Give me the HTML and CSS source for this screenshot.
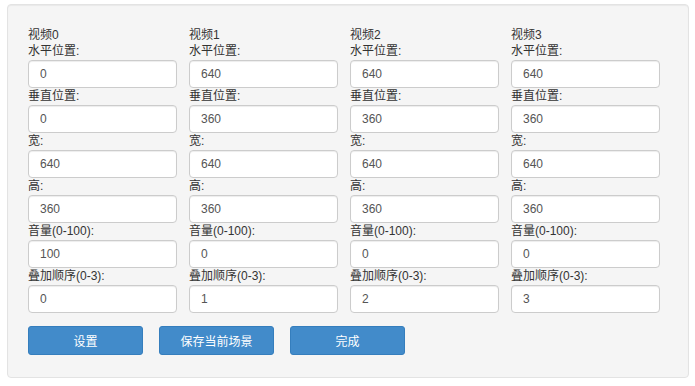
FILE: index.html
```html
<!DOCTYPE html>
<html lang="zh-CN">
<head>
  <meta charset="UTF-8" />
  <title>视频布局设置</title>
  <link rel="stylesheet" href="styles.css">
</head>
<body>
  <div class="well">
    <div class="video-grid">
      <!-- 视频0 -->
      <div class="video-col">
        <div class="video-title">视频0</div>
        <label>水平位置:</label>
        <input type="text" value="0">
        <label>垂直位置:</label>
        <input type="text" value="0">
        <label>宽:</label>
        <input type="text" value="640">
        <label>高:</label>
        <input type="text" value="360">
        <label>音量(0-100):</label>
        <input type="text" value="100">
        <label>叠加顺序(0-3):</label>
        <input type="text" value="0">
      </div>
      <!-- 视频1 -->
      <div class="video-col">
        <div class="video-title">视频1</div>
        <label>水平位置:</label>
        <input type="text" value="640">
        <label>垂直位置:</label>
        <input type="text" value="360">
        <label>宽:</label>
        <input type="text" value="640">
        <label>高:</label>
        <input type="text" value="360">
        <label>音量(0-100):</label>
        <input type="text" value="0">
        <label>叠加顺序(0-3):</label>
        <input type="text" value="1">
      </div>
      <!-- 视频2 -->
      <div class="video-col">
        <div class="video-title">视频2</div>
        <label>水平位置:</label>
        <input type="text" value="640">
        <label>垂直位置:</label>
        <input type="text" value="360">
        <label>宽:</label>
        <input type="text" value="640">
        <label>高:</label>
        <input type="text" value="360">
        <label>音量(0-100):</label>
        <input type="text" value="0">
        <label>叠加顺序(0-3):</label>
        <input type="text" value="2">
      </div>
      <!-- 视频3 -->
      <div class="video-col">
        <div class="video-title">视频3</div>
        <label>水平位置:</label>
        <input type="text" value="640">
        <label>垂直位置:</label>
        <input type="text" value="360">
        <label>宽:</label>
        <input type="text" value="640">
        <label>高:</label>
        <input type="text" value="360">
        <label>音量(0-100):</label>
        <input type="text" value="0">
        <label>叠加顺序(0-3):</label>
        <input type="text" value="3">
      </div>
    </div>

    <div class="actions">
      <button class="btn">设置</button>
      <button class="btn">保存当前场景</button>
      <button class="btn">完成</button>
    </div>
  </div>
</body>
</html>
```

FILE: styles.css
```css
/* Reset & Base */
*, *::before, *::after { box-sizing: border-box; margin: 0; padding: 0; }
html, body { font-family: 'Liberation Sans', Arial, 'Noto Sans CJK SC', sans-serif; font-size: 12px; color: #333; background: #fff; }
button { cursor: pointer; font-family: inherit; }

/* Well */
.well { margin: 4px 6px 0 7px; height: 374px; padding: 22px 20px 0 20px; background: #f5f5f5; border: 1px solid #e3e3e3; border-radius: 4px; box-shadow: inset 0 1px 1px rgba(0,0,0,0.05); }

/* Video columns */
.video-grid { display: grid; grid-template-columns: repeat(4, 149px); column-gap: 12px; }
.video-col { display: flex; flex-direction: column; }
.video-title { height: 16px; line-height: 16px; }
.video-col label { display: block; height: 17px; line-height: 16px; }
.video-col input {
  width: 149px;
  height: 28px;
  padding: 0 11px;
  font-family: inherit;
  font-size: 12px;
  color: #555;
  background: #fff;
  border: 1px solid #ccc;
  border-radius: 4px;
  box-shadow: inset 0 1px 1px rgba(0,0,0,0.075);
}

/* Buttons */
.actions { display: flex; gap: 16px; margin-top: 13px; }
.btn { width: 115px; height: 29px; background: #428bca; color: #fff; border: 1px solid #357ebd; border-radius: 3px; font-size: 12px; }
```
